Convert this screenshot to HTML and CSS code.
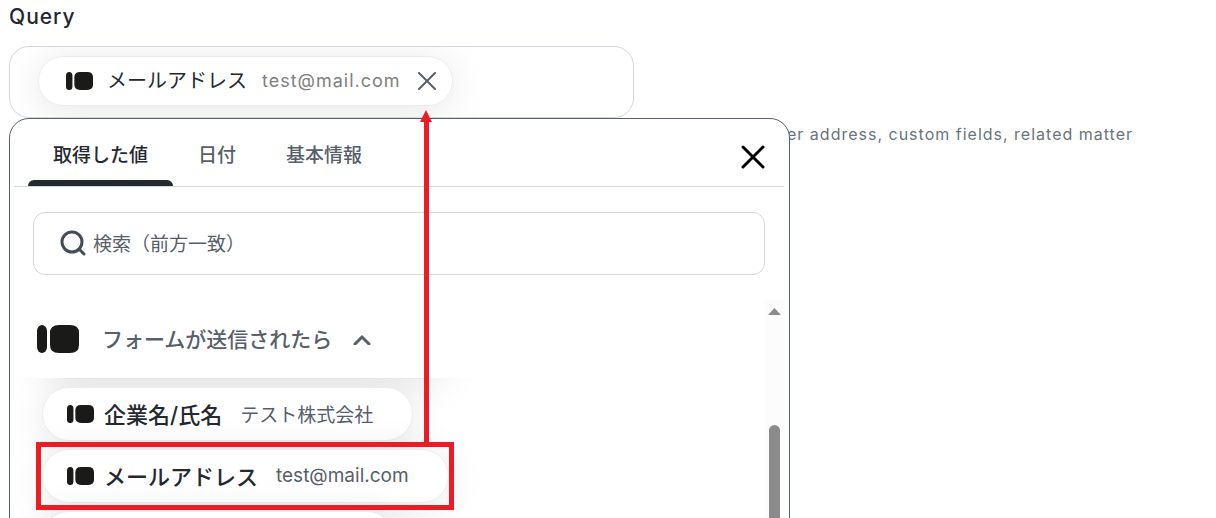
FILE: index.html
```html
<!DOCTYPE html>
<html lang="ja">
<head>
    <meta charset="UTF-8">
    <meta name="viewport" content="width=device-width, initial-scale=1.0">
    <title>Query</title>
    <link rel="stylesheet" href="styles.css">
</head>
<body>
    <!-- Shared logo -->
    <svg class="sprite" aria-hidden="true">
        <symbol id="logo" viewBox="0 0 42 28">
            <rect x="0" y="0" width="10" height="28" rx="5" ry="6"></rect>
            <path d="M22 0h11q9 0 9 8v12q0 8-9 8H22q-9 0-9-8V8q0-8 9-8z"></path>
        </symbol>
    </svg>

    <main class="form">
        <h1 class="label">Query</h1>
        <div class="field">
            <div class="chip">
                <svg class="logo"><use href="#logo"></use></svg>
                <span class="chip-name">メールアドレス</span>
                <span class="chip-value">test@mail.com</span>
                <button class="icon-btn chip-remove" type="button" aria-label="Remove">
                    <svg viewBox="0 0 18 18"><path d="M1 1l16 16M17 1L1 17"></path></svg>
                </button>
            </div>
        </div>
        <p class="hint">er address, custom fields, related matter</p>

        <section class="panel">
            <div class="panel-head">
                <nav class="tabs">
                    <button class="tab active" type="button">取得した値</button>
                    <button class="tab" type="button">日付</button>
                    <button class="tab" type="button">基本情報</button>
                </nav>
                <button class="icon-btn panel-close" type="button" aria-label="Close">
                    <svg viewBox="0 0 22 22"><path d="M1 1l20 20M21 1L1 21"></path></svg>
                </button>
            </div>

            <label class="search">
                <svg class="search-icon" viewBox="0 0 28 28"><circle cx="13" cy="12" r="10"></circle><path d="M20 19l5 5"></path></svg>
                <input type="text" placeholder="検索（前方一致）" aria-label="検索（前方一致）">
            </label>

            <div class="results">
                <div class="group">
                    <button class="group-head" type="button">
                        <svg class="logo logo-large"><use href="#logo"></use></svg>
                        <span class="group-name">フォームが送信されたら</span>
                        <svg class="chevron" viewBox="0 0 18 12"><path d="M2 11l7-7 7 7"></path></svg>
                    </button>
                    <div class="items">
                        <div class="item item-above"></div>
                        <button class="item" type="button">
                            <svg class="logo"><use href="#logo"></use></svg>
                            <span class="item-name">企業名/氏名</span>
                            <span class="item-value">テスト株式会社</span>
                        </button>
                        <button class="item" type="button">
                            <svg class="logo"><use href="#logo"></use></svg>
                            <span class="item-name">メールアドレス</span>
                            <span class="item-value">test@mail.com</span>
                        </button>
                        <div class="item item-below"></div>
                    </div>
                </div>
                <div class="scrollbar">
                    <svg class="scroll-up" viewBox="0 0 13 7"><path d="M6.5 0L13 7H0z"></path></svg>
                    <div class="scroll-thumb"></div>
                </div>
            </div>
        </section>

        <!-- Callout from the list item to the field -->
        <div class="callout-box"></div>
        <svg class="callout-arrow" viewBox="0 0 12 334"><path d="M6 0l6 12H9v322H4V12H0z"></path></svg>
    </main>
</body>
</html>
```

FILE: styles.css
```css
* {
    box-sizing: border-box;
}

body {
    margin: 0;
    height: 100vh;
    overflow: hidden;
    background: #fff;
    color: #24292f;
    font-family: Inter, "Noto Sans CJK JP", sans-serif;
}

button {
    padding: 0;
    border: none;
    background: none;
    color: inherit;
    font-family: inherit;
    cursor: pointer;
}

.sprite {
    position: absolute;
    width: 0;
    height: 0;
}

.form {
    position: relative;
    height: 100%;
    padding: 0 9px;
    overflow: hidden;
}

.label {
    margin: 0;
    padding: 3px 0 15px;
    font-size: 21px;
    font-weight: 500;
    line-height: 28px;
    letter-spacing: 1px;
}

.field {
    display: flex;
    align-items: center;
    max-width: 625px;
    height: 72px;
    padding: 0 28px 2px;
    border: 1px solid #d0d7de;
    border-radius: 20px;
    overflow: hidden;
}

.chip {
    display: flex;
    align-items: center;
    height: 50px;
    padding: 0 16px 0 27px;
    border: 1px solid #e9edf2;
    border-radius: 25px;
    background: #fff;
    box-shadow: 0 5px 40px rgba(0, 0, 0, 0.1);
}

.logo {
    width: 27px;
    height: 18px;
    fill: #1a1a18;
}

.chip-name {
    margin: 0 15px 0 14px;
    padding-bottom: 3px;
    font-size: 20px;
}

.chip-value {
    padding-bottom: 2px;
    color: #808080;
    font-size: 18px;
    letter-spacing: 1px;
}

.icon-btn svg {
    display: block;
    fill: none;
    stroke: currentColor;
    stroke-width: 2;
    stroke-linecap: round;
}

.chip-remove {
    margin-left: 17px;
    color: #57606a;
}

.chip-remove svg {
    width: 18px;
    height: 18px;
}

.hint {
    margin: 4px 0 0 778px;
    color: #6a737d;
    font-size: 16px;
    line-height: 24px;
    letter-spacing: 1px;
    white-space: nowrap;
}

.panel {
    position: absolute;
    top: 118px;
    bottom: -40px;
    left: 9px;
    display: flex;
    flex-direction: column;
    width: 781px;
    padding: 0 5px 0 4px;
    border: 1px solid #57606a;
    border-radius: 20px;
    background: #fff;
    overflow: hidden;
}

.panel-head {
    display: flex;
    flex: none;
    align-items: center;
    justify-content: space-between;
    height: 68px;
    padding: 0 20px 0 14px;
    border-bottom: 1px solid #d0d7de;
}

.tabs {
    display: flex;
    height: 100%;
}

.tab {
    padding: 8px 25px 0;
    border-bottom: 6px solid transparent;
    color: #57606a;
    font-size: 19px;
    font-weight: 500;
}

.tab.active {
    position: relative;
    color: #24292f;
}

.tab.active::after {
    position: absolute;
    right: 0;
    bottom: -6px;
    left: 0;
    height: 6px;
    border-radius: 6px 6px 0 0;
    background: #24292f;
    content: "";
}

.panel-close {
    margin-top: 8px;
    color: #000;
}

.panel-close svg {
    width: 22px;
    height: 22px;
    stroke-width: 3;
    overflow: visible;
}

.search {
    display: flex;
    flex: none;
    align-items: center;
    height: 63px;
    margin: 25px 19px 0;
    padding: 0 25px;
    border: 1px solid #d0d7de;
    border-radius: 12px;
}

.search-icon {
    width: 28px;
    height: 28px;
    fill: none;
    stroke: #444c56;
    stroke-width: 3;
    stroke-linecap: round;
}

.search input {
    flex: 1;
    margin-left: 6px;
    padding: 2px 0 0;
    border: none;
    outline: none;
    background: none;
    color: #24292f;
    font-family: inherit;
    font-size: 19px;
}

.search input::placeholder {
    color: #57606a;
}

.results {
    display: flex;
    flex: 1;
    margin-top: 25px;
}

.group {
    flex: 1;
}

.group-head {
    display: flex;
    align-items: center;
    width: 100%;
    height: 78px;
    padding-left: 23px;
    color: #57606a;
    font-size: 21px;
    font-weight: 500;
}

.group-name {
    padding-bottom: 3px;
}

.logo-large {
    width: 42px;
    height: 28px;
    margin-right: 23px;
}

.chevron {
    width: 18px;
    height: 12px;
    margin-left: 21px;
    fill: none;
    stroke: #57606a;
    stroke-width: 3;
    stroke-linecap: round;
}

.items {
    display: flex;
    flex-direction: column;
    align-items: flex-start;
    gap: 8px;
    height: 100%;
    padding-left: 28px;
    overflow: hidden;
}

.item {
    display: flex;
    flex: none;
    align-items: center;
    height: 54px;
    padding: 0 39px 0 24px;
    border: 1px solid #e9edf2;
    border-radius: 27px;
    background: #fff;
    box-shadow: 0 5px 40px rgba(0, 0, 0, 0.1);
}

/* Neighbouring items scrolled mostly out of view */
.item-above {
    width: 406px;
    margin-top: -53px;
}

.item-below {
    width: 352px;
}

.item-name {
    margin: 0 18px 0 10px;
    padding-bottom: 3px;
    font-size: 22px;
    font-weight: 500;
}

.item-value {
    padding-bottom: 1px;
    color: #57606a;
    font-size: 19px;
}

.scrollbar {
    display: flex;
    flex-direction: column;
    align-items: center;
    width: 19px;
    padding-top: 8px;
    background: #fcfcfc;
}

.scroll-up {
    width: 13px;
    height: 7px;
    fill: #8b8b8b;
}

.scroll-thumb {
    flex: 1;
    width: 11px;
    margin-top: 110px;
    border-radius: 6px;
    background: #8b8b8b;
}

.callout-box {
    position: absolute;
    top: 442px;
    left: 36px;
    width: 418px;
    height: 68px;
    border: 5px solid #ed1c24;
}

.callout-arrow {
    position: absolute;
    top: 110px;
    left: 420px;
    width: 12px;
    height: 334px;
    fill: #ed1c24;
}
```
